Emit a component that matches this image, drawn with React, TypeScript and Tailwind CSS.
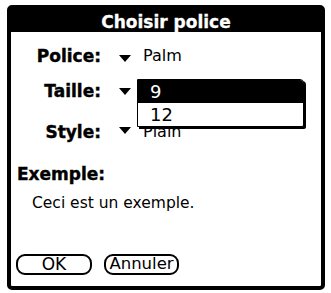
import React from 'react';

const font = "font-['DejaVu_Sans',sans-serif]";

const Arrow: React.FC<{ className?: string }> = ({ className }) => (
  <svg width="12" height="7" viewBox="0 0 12 7" className={className}>
    <path d="M0 0 H12 L6 7 Z" fill="black" />
  </svg>
);

const Row: React.FC<{ label: string; value: string; mt: string; arrowMt: string }> = ({ label, value, mt, arrowMt }) => (
  <div className={`flex h-[20px] items-start ${mt}`}>
    <div className="w-[90px] text-right font-bold text-[17px] leading-[20px] [-webkit-text-stroke:0.4px_black]">{label}</div>
    <Arrow className={`ml-[18px] shrink-0 ${arrowMt}`} />
    <div className="ml-[12px] text-[16px] leading-[20px]">{value}</div>
  </div>
);

const App: React.FC = () => {
  return (
    <div className={`w-[331px] h-[293px] bg-white pl-[7px] pt-[5px] text-black ${font}`}>
      <div className="relative w-[318px] h-[285px] border-4 border-black rounded-[5px] bg-white flex flex-col">
        {/* Title */}
        <div className="h-[23px] bg-black text-white text-center font-bold text-[17px] leading-[20px] pt-[3px] [-webkit-text-stroke:0.3px_white]">
          Choisir police
        </div>

        {/* Fields */}
        <Row label="Police:" value="Palm" mt="mt-[14px]" arrowMt="mt-[9px]" />
        <Row label="Taille:" value="9" mt="mt-[15px]" arrowMt="mt-[7px]" />
        <Row label="Style:" value="Plain" mt="mt-[21px]" arrowMt="mt-[5px]" />

        {/* Example */}
        <div className="mt-[22px] ml-[6px] h-[20px] font-bold text-[17px] leading-[20px] [-webkit-text-stroke:0.4px_black]">Exemple:</div>
        <div className="mt-[10px] ml-[21px] text-[15.5px] leading-[18px]">Ceci est un exemple.</div>

        {/* Buttons */}
        <div className="mt-auto mb-[11px] ml-[5px] flex gap-[12px]">
          <button className="w-[76px] h-[21px] border-2 border-black rounded-[9px] flex items-center justify-center text-[17px] leading-none">
            OK
          </button>
          <button className="w-[75px] h-[21px] border-2 border-black rounded-[9px] flex items-center justify-center text-[16.5px] leading-none">
            Annuler
          </button>
        </div>

        {/* Size popup list */}
        <div className="absolute left-[126px] top-[70px] w-[167px] border border-black rounded-tr-[4px] rounded-br-[2px] bg-white shadow-[2px_2px_0_0_#000] overflow-hidden">
          <div className="h-[23px] bg-black text-white pl-[12px] text-[18px] leading-[24px]">9</div>
          <div className="h-[23px] pl-[12px] pt-[2px] text-[18px] leading-[19px]">12</div>
        </div>
      </div>
    </div>
  );
};

export default App;
